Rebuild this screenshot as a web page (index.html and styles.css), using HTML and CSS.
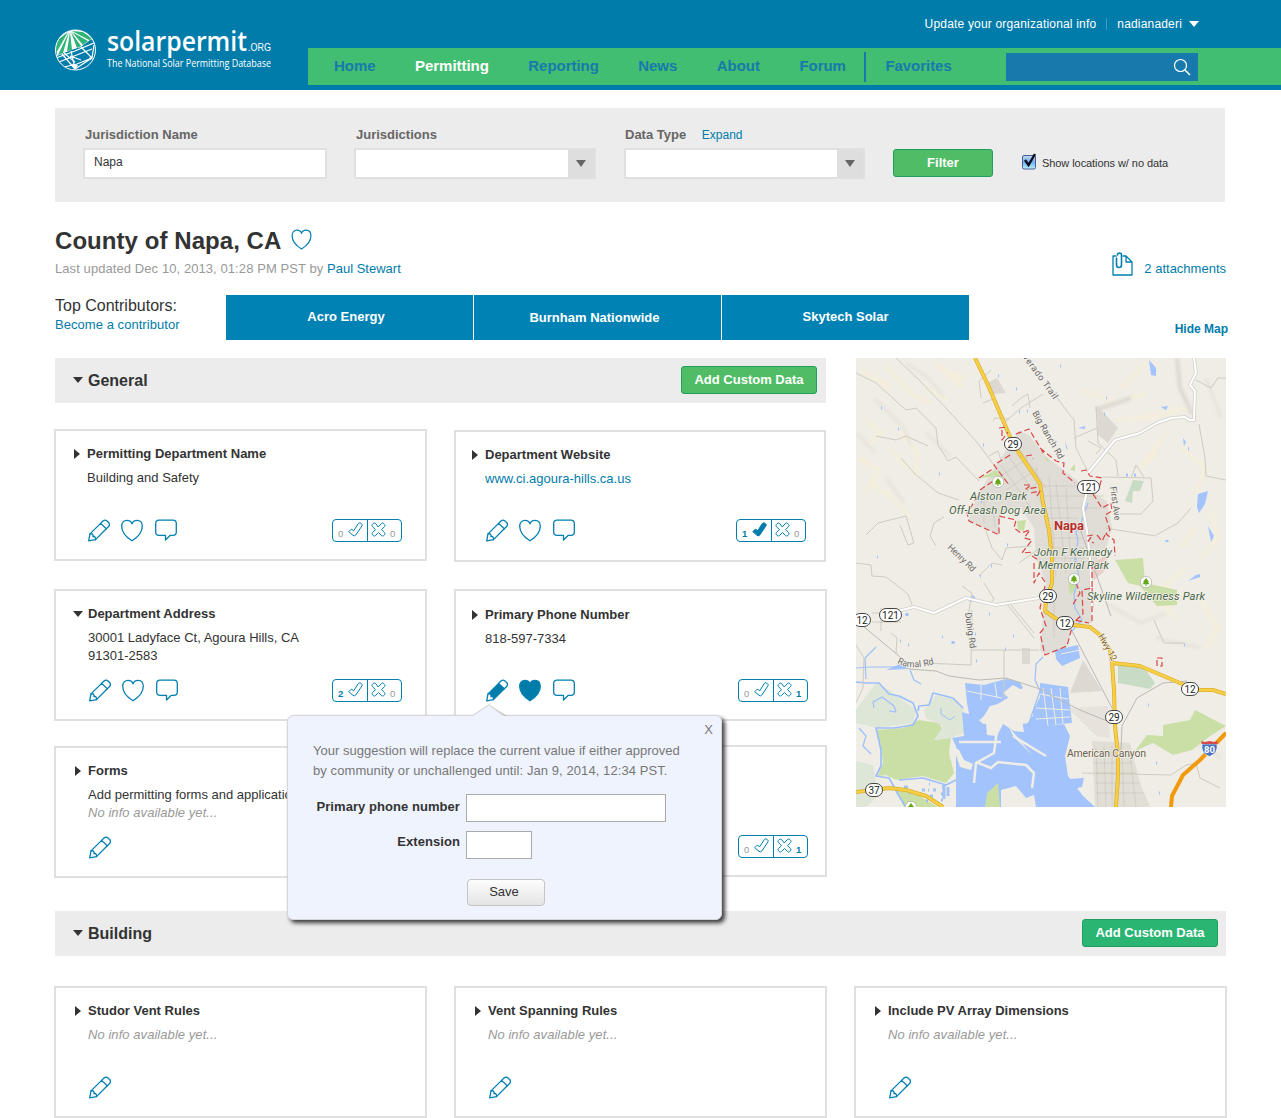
FILE: index.html
```html
<!DOCTYPE html>
<html lang="en">
<head>
<meta charset="utf-8">
<title>County of Napa, CA – solarpermit.org</title>
<link rel="stylesheet" href="styles.css">
</head>
<body>
<svg width="0" height="0" class="sprite" aria-hidden="true">
  <symbol id="pencil" viewBox="0 0 22 23"><path class="ln" d="M2 14.900.7 21.800 7.500 20.600"/><path class="ln body" d="M2 14.900 12.600 4.400l5.700 5.400L7.500 20.600q.2-1.600-.4-2.400-.6-.9-2.100-.6.300-1.400-.4-2.300-.7-.8-2.600-.4Z"/><path class="ln" d="M12.600 4.400 15 2q2-1.800 4 0l1.600 1.500q1.800 2 0 4l-2.300 2.300"/></symbol>
  <symbol id="heart" viewBox="0 0 22 23"><path class="ln body" d="M11 21.8C4 17.5.7 12.5.7 7.3.7 3.4 3 1.3 6 1.3c2.500 0 4.300 1.200 5 3.500.7-2.300 2.500-3.500 5-3.500 3 0 5.300 2.100 5.300 6 0 5.200-3.300 10.200-10.300 14.500Z"/></symbol>
  <symbol id="bubble" viewBox="0 0 22 23"><path class="ln" d="M4 1.200h14q3.300 0 3.300 3.300v8.500q0 3.300-3.300 3.300h-2.700l-4.800 4.700v-4.700H4Q.7 16.300.7 13V4.500Q.7 1.200 4 1.200Z"/></symbol>
  <symbol id="check" viewBox="0 0 15 15"><path class="ln thin body" d="M1 9.400 3.200 7.200l2.700 1.400 4.300-7q.8-1.200 2-.6l1.400.8q1 .8.400 2L7.800 13q-1 1.500-2.400.600Z"/></symbol>
  <symbol id="cross" viewBox="0 0 15 15"><path class="ln thin" d="M7.500 4.700 10.600 1.400q1.300-1 2.300.2l.8.900q.8 1.200-.2 2.200l-3 2.900 3 3q1 1.100.1 2.200l-.9.800q-1.100.9-2.200-.1l-3-3-3 3q-1.100 1-2.200.1l-.9-.8q-.9-1.100.1-2.200l3-3-3-2.900q-1-1-.2-2.200l.8-.9q1-1.200 2.300-.2Z"/></symbol>
</svg>

<header class="topbar">
  <a class="logo">
    <svg width="220" height="46" viewBox="0 0 220 46">
      <defs><clipPath id="globe"><circle cx="20.500" cy="22" r="20"/></clipPath></defs>
      <g clip-path="url(#globe)">
        <path d="M0 0H41V11L35 12 26 19 16 22 2 28Z" fill="#fff"/>
        <g fill="#2fb377"><path d="M13 4 0 14V27Z"/><path d="M14 4 3 27 8 25Z"/><path d="M15 4 12 23 17 22Z"/><path d="M16 4 22 20 26 18Z"/><path d="M17 4 28 17 33 13Z"/><path d="M17 3 28 4 38 11 34 12Z"/></g>
        <path d="M1 30 20 23 41 14M7 26 20 41M16 23 20 41M26 19 37 30 39 17M4 34 37 21M9 39 22 36 37 30M15 28 26 32M20 41 37 30M9 25 20 34" fill="none" stroke="#fff" stroke-width="1.200"/>
        <path d="M17 36 20 42 23 37ZM34 30 38 28 36 32Z" fill="#fff"/>
      </g>
      <circle cx="20.500" cy="22" r="20" fill="none" stroke="#fff" stroke-width="1"/>
      <text class="brand" x="52" y="23" textLength="140" lengthAdjust="spacingAndGlyphs">solarpermit</text>
      <text class="org" x="193" y="23" textLength="23" lengthAdjust="spacingAndGlyphs">.ORG</text>
      <text class="tag" x="52" y="38.500" textLength="164" lengthAdjust="spacingAndGlyphs">The National Solar Permitting Database</text>
    </svg>
  </a>
  <div class="topright">
    <div class="account"><a>Update your organizational info</a><i></i><a>nadianaderi</a><b class="down"></b></div>
    <nav>
      <a>Home</a><a class="on">Permitting</a><a>Reporting</a><a>News</a><a>About</a><a>Forum</a><a class="fav">Favorites</a>
      <div class="search"><svg width="18" height="18" viewBox="0 0 18 18"><circle cx="7.500" cy="7.500" r="6" fill="none" stroke="#fff" stroke-width="1.200"/><path d="m12 12 5 5" stroke="#fff" stroke-width="1.500"/></svg></div>
    </nav>
  </div>
</header>

<div class="page">
  <form class="filter">
    <div class="field"><label>Jurisdiction Name</label><div class="box">Napa</div></div>
    <div class="field second"><label>Jurisdictions</label><div class="box select"><b class="down"></b></div></div>
    <div class="field third"><label>Data Type <a>Expand</a></label><div class="box select"><b class="down"></b></div></div>
    <a class="btn go">Filter</a>
    <span class="nodata"><svg width="16" height="19" viewBox="0 0 16 19"><defs><linearGradient id="cb" x2="0" y2="1"><stop stop-color="#c4d9f3"/><stop offset=".5" stop-color="#6fb0f0"/><stop offset="1" stop-color="#b9f0ff"/></linearGradient></defs><rect x="1.500" y="4.500" width="13" height="13.500" rx="1.500" fill="url(#cb)" stroke="#4a5f96"/><path d="m4 9 3.500 5L14 3" fill="none" stroke="#0a0d1c" stroke-width="2.400"/></svg>Show locations w/ no data</span>
  </form>

  <div class="heading">
    <div>
      <h1>County of Napa, CA <svg class="ico" width="21" height="21"><use href="#heart"/></svg></h1>
      <p class="meta">Last updated Dec 10, 2013, 01:28 PM PST by <a>Paul Stewart</a></p>
    </div>
    <a class="attach"><svg class="ico" width="21" height="24" viewBox="0 0 21 24"><path class="ln" d="M4 4H1v19h19V10l-6-6h-3M14 4v6h6"/><path class="ln clip" d="M4.500 6v7q0 2.500 2.500 2.500T9.500 13V3Q9.500 1 7.500 1T5.500 3"/></svg>2 attachments</a>
  </div>

  <div class="contrib">
    <div class="who"><p>Top Contributors:</p><a>Become a contributor</a></div>
    <div class="bars"><a>Acro Energy</a><a class="low">Burnham Nationwide</a><a class="end">Skytech Solar</a></div>
    <a class="hide">Hide Map</a>
  </div>

  <div class="split">
    <section class="left">
      <div class="bar"><b class="down"></b><h2>General</h2><a class="btn">Add Custom Data</a></div>
      <div class="cards two">
        <article class="card">
          <h3><b class="right"></b>Permitting Department Name</h3><p>Building and Safety</p>
          <div class="tools"><svg class="ico"><use href="#pencil"/></svg><svg class="ico"><use href="#heart"/></svg><svg class="ico"><use href="#bubble"/></svg>
          <div class="vote"><span>0<svg class="ico"><use href="#check"/></svg></span><span><svg class="ico"><use href="#cross"/></svg>0</span></div></div>
        </article>
        <article class="card site">
          <h3><b class="right"></b>Department Website</h3><p><a>www.ci.agoura-hills.ca.us</a></p>
          <div class="tools"><svg class="ico"><use href="#pencil"/></svg><svg class="ico"><use href="#heart"/></svg><svg class="ico"><use href="#bubble"/></svg>
          <div class="vote"><span><em>1</em><svg class="ico full"><use href="#check"/></svg></span><span><svg class="ico"><use href="#cross"/></svg>0</span></div></div>
        </article>
        <article class="card addr">
          <h3><b class="down"></b>Department Address</h3><p>30001 Ladyface Ct, Agoura Hills, CA<br>91301-2583</p>
          <div class="tools"><svg class="ico"><use href="#pencil"/></svg><svg class="ico"><use href="#heart"/></svg><svg class="ico"><use href="#bubble"/></svg>
          <div class="vote"><span><em>2</em><svg class="ico"><use href="#check"/></svg></span><span><svg class="ico"><use href="#cross"/></svg>0</span></div></div>
        </article>
        <article class="card phone">
          <h3><b class="right"></b>Primary Phone Number</h3><p>818-597-7334</p>
          <div class="tools"><svg class="ico full"><use href="#pencil"/></svg><svg class="ico full"><use href="#heart"/></svg><svg class="ico"><use href="#bubble"/></svg>
          <div class="vote"><span>0<svg class="ico"><use href="#check"/></svg></span><span><svg class="ico"><use href="#cross"/></svg><em>1</em></span></div></div>
          <div class="popup">
            <svg class="tip" width="36" height="12" viewBox="0 0 36 12"><path d="m19 2 16 10h-7Z" fill="#bbb"/><path d="M0 12 17 .8 32 12" fill="#eff3fe" stroke="#d8d9dc" stroke-width="1.200"/></svg>
            <a class="x">X</a>
            <p class="note">Your suggestion will replace the current value if either approved<br><span>by community or unchallenged until: Jan 9, 2014, 12:34 PST.</span></p>
            <div class="row"><label>Primary phone number</label><input></div>
            <div class="row second"><label>Extension</label><input class="ext"></div>
            <button type="button">Save</button>
          </div>
        </article>
        <article class="card forms">
          <h3><b class="right"></b>Forms</h3><p>Add permitting forms and applications<br><i>No info available yet...</i></p>
          <div class="tools"><svg class="ico"><use href="#pencil"/></svg></div>
        </article>
        <article class="card last">
          <div class="tools"><div class="vote"><span>0<svg class="ico"><use href="#check"/></svg></span><span><svg class="ico"><use href="#cross"/></svg><em>1</em></span></div></div>
        </article>
      </div>
    </section>
    <svg class="map" width="370" height="449" viewBox="0 0 370 449">
      <defs>
        <symbol id="park" viewBox="0 0 12 12" width="12" height="12"><circle cx="6" cy="6" r="5.700" fill="#fff" stroke="#aab09f" stroke-width=".7"/><path d="m6 2 3 4H8l1.500 2.200h-3V10h-1V8.200h-3L4 6H3Z" fill="#65a818"/></symbol>
        <filter id="soft"><feGaussianBlur stdDeviation="1.500"/></filter>
      </defs>
      <rect width="370" height="449" fill="#f0ede6"/>
      <g filter="url(#soft)" fill="none" stroke="#f5eedb" stroke-width="4">
        <path d="M5 12 35 30M30 8 58 38 75 45M80 5 90 15 110 20M70 30 92 42M8 60 25 75 12 88M45 75 62 95 60 120M3 100 22 112 10 135M35 92 52 110M15 125 35 138 55 160M85 10 108 30M225 32 260 45 290 35M260 62 300 58 332 50M300 95 285 110 310 75M325 90 350 110 340 135M355 150 362 180 345 200M330 210 300 235 320 260M345 240 362 270 350 290M340 170 325 190M290 5 265 30"/>
        <path d="M50 5 70 18 88 38M18 40 48 70 55 88M0 75 20 95M70 75 95 98M30 120 48 145M350 20 365 60M250 245 285 265 310 255M300 280 345 290M340 385 365 400" stroke="#e7e3da" stroke-width="3"/>
        <path d="M321 0 324 30 336 56M240 52 275 40" stroke="#ddd8d1" stroke-width="4"/>
      </g>
      <g fill="#ddd9d2">
        <path d="M122 137 137 112 163 73 173 77 188 97 214 117 234 133 251 143 256 170 251 187 234 213 236 265 217 267 211 288 189 297 184 292 187 258 190 225 180 200 178 170 165 150 145 155 142 176 112 163Z" opacity=".85"/>
        <path d="M131 25 141 20 150 35 137 36Z"/><path d="M241 48 262 70 252 85 242 77Z"/><path d="M214 335 227 302 246 333Z"/><path d="M236 383 274 385 284 425 294 449H239Z" opacity=".8"/><path d="M166 290h8v16h-8Z"/>
        <path d="M212 350 252 348 254 380 240 378Z" opacity=".5"/>
      </g>
      <path d="M232 208 250 197 252 210 238 222Z" fill="#e8cfca"/>
      <g fill="#c9dfa5">
        <path d="M20 372 47 370 63 362 83 365 87 372 78 382 95 380 93 395 98 415 90 425 67 418 40 422 30 417 22 418 27 405 25 388Z"/>
        <path d="M259 202 287 200 289 225 321 232V247L301 248 284 228 272 225Z"/>
        <path d="M279 393 291 377 307 378V367L334 362 339 352 370 368 354 378 336 392 317 397 297 385Z"/>
        <path d="M131 435 142 425 144 449H129ZM40 432 60 436 82 449H48Z"/><path d="M124 120 140 112 145 118ZM161 163 170 162 168 173 162 172ZM214 112 219 106V113ZM212 225 222 222 220 232 214 237ZM188 96 194 105 190 102Z"/>
      </g>
      <g fill="#c8dcc5"><path d="M262 308 287 308 299 325 294 331 262 325Z"/><path d="M277 122 288 123 284 133 277 133 276 145 269 143Z"/></g>
      <g fill="#dde6d7">
        <path d="M0 352 10 338 20 325 33 332 60 352 57 365 20 370 0 365Z"/><path d="M68 352 80 337 100 342 108 352V375L95 380 78 382 87 368 70 360Z"/><path d="M0 403 17 407 22 438 10 449H0Z"/>
      </g>
      <g fill="#a2c3fc">
        <path d="M109 325 128 327 150 321 164 324 167 330 156 336 146 345 134 348 127 360 115 366 111 345Z"/>
        <path d="M106 354 119 358 127 366 145 364 153 369 157 378 176 397 196 390 208 366 214 378 209 398 212 418 227 438 239 449H100V388L96 380 108 378Z"/>
        <path d="M153 369 172 365 180 353 192 368 208 366 200 400 176 397Z"/>
        <path d="M199 292 222 287 224 300 206 308 200 301Z"/>
        <path d="M184 325 212 329 213 340 216 365 204 366 178 371 177 353 184 339Z"/>
        <path d="M212 421 228 420 226 429 212 432Z"/><path d="M293 2 300 10V18L295 17Z"/><path d="M342 136 352 133 349 146 343 155 341 149Z"/><path d="M352 168 358 178 355 184Z"/><path d="M305 49 312 48 310 52ZM222 70 229 68V71ZM332 223 340 217 344 216V219ZM30 312 44 306 53 311ZM209 83 212 92 210 90ZM327 80 330 84 328 88Z"/>
        <path d="M112 242 117 237 121 242 115 244Z"/>
      </g>
      <g fill="none" stroke="#f0ede6" stroke-width="1">
        <path d="M184 336 212 341M180 350 214 352M180 361 214 359M187 330 192 368M195 330 200 367M204 330 207 366M205 296 224 292M111 333 146 340M125 327V342M139 325 141 340"/>
        <path d="M142 365 138 395 120 405 118 425M103 384H145M120 404 135 410 142 404 170 407 178 415 176 430M157 378 180 392 190 398" stroke-width="2.500"/>
      </g>
      <g fill="#f0ede6">
        <path d="M135 350 150 341 156 347 158 340 164 349 168 374 158 373 147 366 141 378 131 377 130 365 125 361Z"/>
        <path d="M97 388 103 392 108 402 117 406 115 412 104 409ZM145 432 160 428 170 440 178 437 180 449H145ZM147 335 157 327 166 332 170 342 160 346Z"/>
      </g>
      <path d="M131 435 142 425 144 449H129Z" fill="#c9dfa5"/>
      <g fill="none" stroke="#9cbffc" stroke-linejoin="round">
        <path d="M0 324 10 325 23 325 33 336 43 338 57 345 62 358 57 367 38 370 20 370 25 392V408L20 418 33 420 43 438 50 449M62 353 63 348 73 347 77 335 97 340 107 350M43 422 67 420 90 427 100 422" stroke-width="1.700"/>
        <path d="M187 299 180 306 179 322 184 333 178 350 172 368M216 273 226 262 219 250 218 236 223 220 220 200M232 145 225 165 220 174 222 183 218 205M54 312 58 322 65 326M0 310 15 309 44 309M18 350 17 344 26 339 38 348 40 354 33 353M10 321 9 300 20 289M3 370 10 378 7 388 15 396" stroke-width="1.200"/>
        <path d="M85 350 85 356 94 362 99 358" stroke-width="1"/>
      </g>
      <path d="M64 436h1m7-4h1m-21 2h2m-6-5h4m14 3h3m5 6h3m0-6h3m-10 11h2m1-17h1m12 3h3m-4 7h2m1-9v14m4-12v9m-7 4h2M42 71h1M25 50h1M83 116h1M142 18h1M160 31h1M163 54h1M171 53h1M127 87h1M125 144h1M21 199h1M204 8h1M250 40h1M248 56h1M270 117h2M278 117h2M311 182v2M328 287h1M292 347h1M332 91h1M300 405h1M303 435h1M51 255v3M44 283h1M52 287h1M86 279h1M97 283v3M119 276h1M120 303h1M133 256h1M149 291h1M157 278h1M72 303h1M124 218h1M151 187h1M135 208h1" stroke="#8fb6fc" stroke-width="3" fill="none" opacity=".8"/>
      <g fill="none" stroke="#cfcbbf" stroke-width="1">
        <path d="M0 15 20 25 50 52 60 50 80 70 82 87 92 103 100 99 123 123M40 0 63 22 90 50 120 83 153 127M20 78 40 82 50 78 72 88M45 100 58 115 82 135 103 142M10 177 22 165 50 158 58 185 52 187 44 167M130 173 136 190 146 202 150 190 175 188M123 218 136 205 146 207M0 205 15 207 16 218 30 219 38 225M38 225 52 236 56 247M88 159 78 165 74 178 80 188M149 64 165 50 187 36M137 63 139 60 153 61M133 98 142 93 145 102M163 205 184 190M125 40 123 23 135 12M127 45 137 41M156 48 165 40 172 36 174 50"/>
        <path d="M190 24 210 52 218 62 220 90 231 112M218 80 241 70M240 48 242 85 260 102 262 118M247 119 295 120 297 143 285 156H260M340 22 355 30 362 20 370 20M343 66 349 100 350 118 370 122M249 170 300 178M335 150 322 165 300 177M240 96 245 90 232 83M298 262 308 285 328 285M110 270 116 235 106 228M115 292H148V340M68 305 115 307 116 252M128 225 138 241 134 246M150 245 178 280M155 247 178 275M148 292H183M16 255H40M16 264H45M25 250V273M0 287 8 300 7 330 0 345M35 275 41 280 40 295M226 415 315 417 330 407 342 405M340 405 344 420 364 430M275 120 280 107 288 119"/>
        <path d="M7 268 43 298 53 311 80 313 93 318 123 322 150 320 190 333 194 337 224 352 261 367M216 273 256 350M331 323 307 325 281 340 266 368 265 392M222 165 255 258" stroke="#bbb9b5"/>
      </g>
      <g fill="none" stroke="#c9c5ba" stroke-width=".6">
        <path d="M145 107 175 150M152 97 187 147M160 86 190 130M142 120 172 100M150 132 182 110M160 142 187 120M180 110 190 160M193 118 200 220M200 125 210 215M210 130 215 210M186 128H245M188 138H248M190 150H250M190 160H222M193 180H228M195 190H228M195 200H228M128 140V165M137 150 139 170M198 240V280M240 390 242 449M248 388 250 449M256 388V449M266 392 268 449M274 395 280 449M238 395H272M238 405H276M240 415H280M240 425H284M240 435H288"/>
      </g>
      <g fill="none" stroke-linejoin="round">
        <path d="M232 115 259 82 284 75 301 65 315 60 329 59 333 62 338 62 339 33 334 27 340 15 338 0M232 129 227 150 231 173 234 200 236 250M42 253 58 249 78 255 110 240 140 247 183 240" stroke="#d3d0c9" stroke-width="3.600"/>
        <path d="M232 115 259 82 284 75 301 65 315 60 329 59 333 62 338 62 339 33 334 27 340 15 338 0M232 129 227 150 231 173 234 200 236 250M42 253 58 249 78 255 110 240 140 247 183 240" stroke="#fff" stroke-width="2"/>
        <path d="M119 0 132 27 149 67 157 86 178 117 184 126 187 145 193 172 196 200V225L190 243 189 253 199 260 217 267 234 269 244 277 254 292 256 305 258 332 259 368 262 398V418L260 449M256 305 284 308 331 328 344 332 357 332 370 336M0 434 33 430 50 432 70 438 87 449" stroke="#dcae2e" stroke-width="4"/>
        <path d="M119 0 132 27 149 67 157 86 178 117 184 126 187 145 193 172 196 200V225L190 243 189 253 199 260 217 267 234 269 244 277 254 292 256 305 258 332 259 368 262 398V418L260 449M256 305 284 308 331 328 344 332 357 332 370 336M0 434 33 430 50 432 70 438 87 449" stroke="#f7cf46" stroke-width="2.600"/>
        <path d="M370 375 344 402 327 417 316 438 315 449" stroke="#f09a0c" stroke-width="4"/>
        <path d="M146 72V82L152 74M143 70 151 69M160 76 173 71 188 96M170 98 175 97 177 101M154 97 138 107 153 127M123 120 138 110M124 132 140 121M122 138 111 155 113 163 143 177V158L160 162 158 170 165 175 174 172 168 180 176 182 166 195 178 194M184 90 200 103 208 105 207 115 219 125M225 113 230 112 234 118 246 120 243 130M237 136 246 150 255 145 256 153 249 157 254 172 250 176 258 182 259 198M231 178 237 177 232 183 238 185M241 177 246 183 249 177M168 127 175 127 170 131 183 129M175 135 184 133 180 140M176 198 184 203M178 205V225L183 215 189 224M189 228 184 250 190 268 184 275 189 297 211 288 218 262 233 265M236 205V230L226 232 227 256 218 264M236 230V265M220 225 224 235 216 248M301 300h5v8h-5z" stroke="#d84545" stroke-width="1.200" stroke-dasharray="6 3"/>
      </g>
      <use href="#park" x="136" y="118"/><use href="#park" x="212" y="215"/><use href="#park" x="284" y="218"/><use href="#park" x="49" y="443"/>
      <g class="shield">
        <rect x="148.500" y="79.500" width="17" height="13" rx="6.500"/><text x="157" y="90">29</text>
        <rect x="221.500" y="122.500" width="22" height="13" rx="6.500"/><text x="232.500" y="133">121</text>
        <rect x="183.500" y="231.500" width="17" height="13" rx="6.500"/><text x="192" y="242">29</text>
        <rect x="200.500" y="258.500" width="17" height="13" rx="6.500"/><text x="209" y="269">12</text>
        <rect x="325.500" y="324.500" width="17" height="13" rx="6.500"/><text x="334" y="335">12</text>
        <rect x="249.500" y="352.500" width="17" height="13" rx="6.500"/><text x="258" y="363">29</text>
        <rect x="23.500" y="250.500" width="22" height="13" rx="6.500"/><text x="34.500" y="261">121</text>
        <rect x="-2.500" y="255.500" width="17" height="13" rx="6.500"/><text x="6" y="266">12</text>
        <rect x="9.500" y="425.500" width="17" height="13" rx="6.500"/><text x="18" y="436">37</text>
      </g>
      <path d="M346 386h15q1.500 9-7.500 12.500Q344.500 395 346 386Z" fill="#4672c4" stroke="#fff" stroke-width=".6"/><path d="m345.500 383 3 1 5-1 5 1 3-1v3h-16Z" fill="#d44b4b"/><text x="353.500" y="394.500" class="i80">80</text>
      <g class="lbl green">
        <text x="114" y="142" textLength="57">Alston Park</text><text x="93" y="156" textLength="97">Off-Leash Dog Area</text>
        <text x="178" y="198" textLength="78">John F Kennedy</text><text x="182" y="211" textLength="71">Memorial Park</text>
        <text x="231" y="242" textLength="118">Skyline Wilderness Park</text>
      </g>
      <text class="city" x="198" y="172" textLength="30">Napa</text>
      <g class="lbl">
        <text x="211" y="399" textLength="79">American Canyon</text>
        <text class="road" transform="translate(91 190) rotate(44)" textLength="35">Henry Rd</text>
        <text class="road" transform="translate(109 255) rotate(82)" textLength="36">Duhig Rd</text>
        <path id="ramal" d="M41 305 Q56 314 84 304" fill="none" stroke="none"/><text class="road"><textPath href="#ramal">Ramal Rd</textPath></text>
        <text class="road" transform="translate(176 55) rotate(60)" textLength="54">Big Ranch Rd</text>
        <text class="road" transform="translate(160 -10) rotate(54)" textLength="64">Silverado Trail</text>
        <text class="road" transform="translate(254 129) rotate(82)" textLength="34">First Ave</text>
        <text class="road hwy" transform="translate(242 278) rotate(61)" textLength="29">Hwy 12</text>
      </g>
    </svg>
  </div>

  <div class="bar building"><b class="down"></b><h2>Building</h2><a class="btn alt">Add Custom Data</a></div>
  <div class="cards three">
    <article class="card addr"><h3><b class="right"></b>Studor Vent Rules</h3><p><i>No info available yet...</i></p><div class="tools"><svg class="ico"><use href="#pencil"/></svg></div></article>
    <article class="card addr"><h3><b class="right"></b>Vent Spanning Rules</h3><p><i>No info available yet...</i></p><div class="tools"><svg class="ico"><use href="#pencil"/></svg></div></article>
    <article class="card addr"><h3><b class="right"></b>Include PV Array Dimensions</h3><p><i>No info available yet...</i></p><div class="tools"><svg class="ico"><use href="#pencil"/></svg></div></article>
  </div>
</div>
</body>
</html>
```
FILE: styles.css
```css
* { box-sizing: border-box; }
body { margin: 0; background: #fff; color: #333; font: 13px/18px "Liberation Sans", Arial, sans-serif; }
h1, h2, h3, p { margin: 0; }
a { color: #007cab; text-decoration: none; }
.sprite { position: absolute; }

.down, .right { display: block; flex: none; background: #333; }
.down { width: 10px; height: 6px; clip-path: polygon(0 0, 100% 0, 50% 100%); }
.right { width: 6px; height: 10px; clip-path: polygon(0 0, 100% 50%, 0 100%); }
.ico { flex: none; color: #007cab; overflow: visible; }
.ln { fill: none; stroke: #007fb0; stroke-width: 1.3; stroke-linejoin: round; stroke-linecap: round; }
.thin { stroke-width: 1; }
.clip { stroke-width: 1.600; }
.full { --fill: #007cab; }
.body { fill: var(--fill, none); }

/* header */
.topbar { height: 90px; background: #007cab; display: flex; }
.logo { width: 308px; padding: 28px 0 0 55px; flex: none; }
.logo svg { display: block; overflow: visible; }
.brand { font: 600 27.500px "Open Sans", sans-serif; fill: #fff; }
.org { font: 10px "Liberation Sans", sans-serif; fill: #fff; }
.tag { font: 10px "Open Sans", sans-serif; fill: #fff; }
.topright { flex: 1; }
.account { height: 48px; width: 891px; display: flex; justify-content: flex-end; align-items: center; font-size: 12px; letter-spacing: .18px; }
.account a { color: #fff; }
.account i { width: 1px; height: 12px; background: #3a9cc8; margin: 0 10px; }
.account .down { background: #fff; margin-left: 7px; }
nav { height: 37px; background: #41be71; display: flex; align-items: center; padding-left: 26px; font-weight: bold; font-size: 15px; letter-spacing: -.04px; }
nav a { color: #187aac; margin: -2px 39.5px 0 0; }
nav a.on { color: #fff; }
nav .fav { border-left: 2px solid #187aac; margin: 0 54px 0 -21px; padding: 0 0 2px 19px; line-height: 28px; }
.search { width: 192px; height: 28px; background: #187aac; display: flex; align-items: center; justify-content: flex-end; padding-right: 7px; }

/* filter */
.page { width: 1172px; margin-left: 55px; }
.filter { width: 1170px; height: 94px; margin-top: 18px; background: #ececec; padding: 17px 0 0 28px; display: flex; }
.field { width: 244px; margin-right: 27px; }
.field.second { width: 242px; margin-right: 28px; }
.field.third { width: 241px; margin-right: 28px; }
.field label { display: block; font-weight: bold; color: #666; line-height: 18px; margin-bottom: 4px; padding: 1px 0 0 2px; }
.field.third label { padding-left: 1px; }
.field label a { font-weight: normal; font-size: 12px; margin-left: 12px; }
.box { height: 31px; background: #fff; border: 2px solid #e0e0e0; font-size: 12px; line-height: 25px; padding-left: 9px; }
.select { display: flex; justify-content: flex-end; }
.select::after { content: ""; width: 26px; background: #dedede; order: 0; }
.select .down { background: #666; order: 1; position: relative; left: -8px; top: 10px; width: 10px; height: 7px; margin-left: -10px; }
.btn { display: block; height: 28px; border: 1px solid #1f9e62; border-radius: 3px; background: #50bd66; color: #fff; font-weight: bold; line-height: 25px; text-align: center; width: 136px; }
.btn.alt { background: #2bb573; }
.go { width: 100px; margin-top: 24px; }
.nodata { display: flex; align-items: center; gap: 5px; font-size: 11px; letter-spacing: -.07px; height: 19px; margin: 28px 0 0 28px; }
.nodata svg { margin-top: -4px; }

/* heading */
.heading { height: 93px; padding: 25px 1px 0 0; display: flex; justify-content: space-between; }
h1 { font-size: 24px; line-height: 28px; display: flex; align-items: center; gap: 10px; letter-spacing: .06px; }
h1 .ico { margin-top: -3px; }
.meta { color: #999; line-height: 16px; margin-top: 6px; letter-spacing: .08px; }
.meta a { letter-spacing: 0; }
.attach { display: flex; gap: 11px; padding-top: 25px; height: 49px; line-height: 33px; }
.contrib { display: flex; height: 45px; }
.who { width: 171px; padding-top: 2px; }
.who p { font-size: 16px; line-height: 18px; }
.who a { display: block; line-height: 19px; letter-spacing: .05px; }
.bars { width: 743px; display: grid; grid-template-columns: 1fr 1fr 1fr; gap: 1px; }
.bars a { background: #0082b4; color: #fff; font-weight: bold; text-align: center; padding: 13px 7px 0 0; }
.bars .low { padding: 14px 6px 0 0; }
.bars .end { padding-right: 0; }
.hide { font-weight: bold; font-size: 12px; margin: 25px -1px 0 auto; }

/* sections */
.split { display: flex; justify-content: space-between; margin-top: 18px; padding-right: 1px; }
.left { width: 771px; height: 553px; }
.bar { height: 45px; background: #ececec; display: flex; align-items: center; padding: 0 9px 1px 18px; }
.bar .down { margin-right: 5px; }
h2 { font-size: 16px; flex: 1; padding-top: 2px; }
.building { width: 1171px; padding-right: 8px; }
.cards { display: grid; column-gap: 27px; margin-left: -1px; }
.two { grid-template-columns: 373px 373px; grid-template-rows: 160px 157px 132px; padding-top: 26px; }
.three { grid-template-columns: 373px 373px 373px; padding-top: 30px; }
.card { --in: 33px; position: relative; height: 132px; border: 2px solid #e0e0e0; padding: 14px 23px 0 calc(var(--in) - 2px); display: flex; flex-direction: column; }
h3 { font-size: 13px; line-height: 18px; display: flex; align-items: center; margin-left: -13px; gap: 7px; }
.card p { line-height: 18px; margin-top: 6px; white-space: nowrap; overflow: hidden; color: #333; }
.card p i { color: #999; letter-spacing: .06px; }
.addr { --in: 34px; }
.card .down { margin: 0 -2px 0 -2px; }
.site { --in: 31px; width: 372px; margin-top: 1px; padding-right: 18px; padding-top: 14px; }
.phone { --in: 31px; padding-right: 17px; padding-top: 15px; }
.forms { --in: 34px; padding-top: 14px; }
.last { margin-top: -1px; padding-right: 17px; }
.tools { display: flex; gap: 11.500px; height: 23px; margin: auto 0 17px .5px; }
.site .tools { margin-bottom: 18px; }
.tools > .ico { width: 22px; height: 23px; }
.vote { width: 70px; height: 23px; border: 1px solid #007fb0; border-radius: 4px; margin-left: auto; display: grid; grid-template-columns: 34px 34px; font-size: 9.500px; line-height: 10px; color: #999; }
.vote span { display: flex; align-items: flex-end; gap: 5px; padding: 0 0 2px 5px; }
.vote span + span { border-left: 1px solid #007fb0; padding-left: 3px; gap: 4px; }
.vote .ico { width: 15px; height: 15px; margin-bottom: 2px; }
.vote em { font-style: normal; font-weight: bold; color: #007cab; }

/* popup */
.popup { position: absolute; z-index: 2; left: -169px; top: 124px; width: 435px; height: 205px; background: #eff3fe; border: 1px solid #d5d6da; border-radius: 6px; box-shadow: 3px 3px 4px rgba(0,0,0,.75); padding: 25px; }
.popup .tip { position: absolute; left: 184px; top: -12px; }
.x { position: absolute; right: 8px; top: 5px; color: #777; }
.card .note { margin: 0 0 13px; line-height: 20px; color: #777; overflow: visible; letter-spacing: .025px; }
.note span { letter-spacing: .08px; }
.row { display: flex; margin-bottom: 9px; gap: 6px; }
.row label { width: 147px; text-align: right; font-weight: bold; line-height: 26px; letter-spacing: .06px; }
.row.second label { line-height: 22px; }
.row input { width: 200px; height: 28px; border: 1px solid #aaa; background: #fff; padding: 0; }
.row .ext { width: 66px; }
.popup button { display: block; margin: 20px 0 0 154px; width: 78px; height: 27px; border: 1px solid #c4c4c4; border-radius: 4px; background: linear-gradient(#fdfdfd, #e4e4e4); font: 13px "Liberation Sans", sans-serif; color: #333; padding: 0 4px 2px 0; }

/* map */
.map { display: block; flex: none; }
.shield rect { fill: #fff; stroke: #444; stroke-width: 1; }
.shield text, .i80 { font: 400 10px Roboto, sans-serif; fill: #222; text-anchor: middle; }
.i80 { fill: #fff; font-weight: 700; font-size: 9.5px; }
.lbl { font: 10.5px Roboto, sans-serif; fill: #6b6250; paint-order: stroke; stroke: #f4f1ea; stroke-width: 1.500px; }
.green { font-style: italic; font-size: 11.300px; fill: #48664a; }
.road { font-size: 9px; fill: #666; }
.hwy { fill: #7a5a14; }
.city { font: bold 13px Roboto, sans-serif; fill: #b3302c; paint-order: stroke; stroke: #f4e9e4; stroke-width: 1.500px; }
```
